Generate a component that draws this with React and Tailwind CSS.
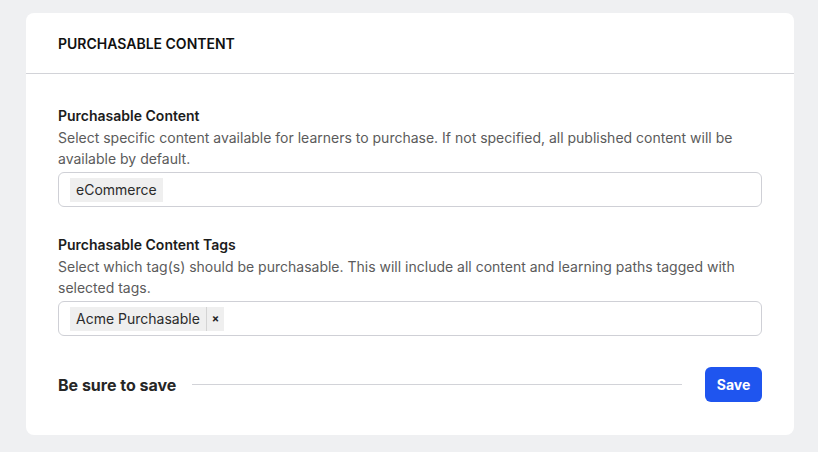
import React from 'react'

const font = { fontFamily: 'Inter, "Noto Sans", sans-serif' }

// ─── Tag Chip ────────────────────────────────────────────────────────────────
function Tag({ label, removable = false }) {
  return (
    <span className="inline-flex items-stretch h-6 bg-[#efefef] text-[14px] text-[#2b2b2b]">
      <span className="flex items-center px-[6px]">{label}</span>
      {removable && (
        <span className="flex items-center border-l border-[#d4d4d4] px-[5px] text-[11px] font-bold text-[#222]">×</span>
      )}
    </span>
  )
}

// ─── Field ───────────────────────────────────────────────────────────────────
function Field({ title, help, children }) {
  return (
    <div>
      <p className="text-[14px] leading-5 font-semibold text-[#1c1c1c]">{title}</p>
      <p className="text-[14px] leading-[21px] text-[#5b5b5b] mt-px">{help}</p>
      <div className="mt-[3px] h-[35px] flex items-center rounded-md border border-[#cfd0d6] pl-[11px]">
        {children}
      </div>
    </div>
  )
}

export default function App() {
  return (
    <div className="w-[818px] h-[452px] bg-[#eff0f2] pt-[13px] pl-[26px] pr-[24px]" style={font}>
      <div className="bg-white rounded-lg h-[422px]">
        <div className="h-[61px] flex items-center px-8 border-b border-[#d2d3d8]">
          <h2 className="text-[14px] font-semibold text-[#111]">PURCHASABLE CONTENT</h2>
        </div>
        <div className="px-8 pt-8">
          <Field
            title="Purchasable Content"
            help="Select specific content available for learners to purchase. If not specified, all published content will be available by default.">
            <Tag label="eCommerce" />
          </Field>
          <div className="mt-[28px]">
            <Field
              title="Purchasable Content Tags"
              help="Select which tag(s) should be purchasable. This will include all content and learning paths tagged with selected tags.">
              <Tag label="Acme Purchasable" removable />
            </Field>
          </div>
          <div className="mt-[31px] flex items-center">
            <span className="text-[16px] font-bold text-[#262626]">Be sure to save</span>
            <div className="flex-1 h-px bg-[#d2d3d8] ml-4 mr-[23px]" />
            <button className="h-[35px] w-[57px] rounded-md bg-[#1f55ef] text-white text-[14px] font-bold">Save</button>
          </div>
        </div>
      </div>
    </div>
  )
}
